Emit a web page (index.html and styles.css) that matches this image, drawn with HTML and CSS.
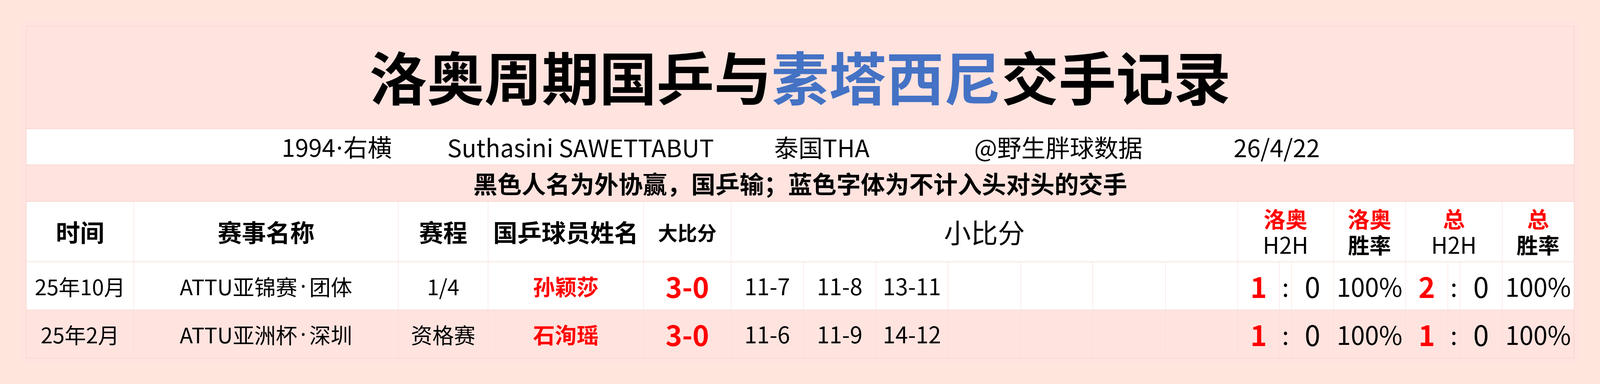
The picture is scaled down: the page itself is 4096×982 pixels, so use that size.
FILE: index.html
```html
<!DOCTYPE html>
<html lang="zh-CN">
<head>
<meta charset="utf-8">
<title>洛奥周期国乒与素塔西尼交手记录</title>
<link rel="stylesheet" href="styles.css">
</head>
<body>
<div class="page">
  <div class="sheet">
    <div class="cell all title pink">洛奥周期国乒与<span class="blue">素塔西尼</span>交手记录</div>
    <div class="cell all info white">
      <span class="info-item w1">1994<span class="dot">·</span>右横</span>
      <span class="info-item w2">Suthasini SAWETTABUT</span>
      <span class="info-item w3">泰国THA</span>
      <span class="info-item w4">@野生胖球数据</span>
      <span class="info-item">26/4/22</span>
    </div>
    <div class="cell all note pink">黑色人名为外协赢，国乒输；蓝色字体为不计入头对头的交手</div>

    <div class="cell white hd">时间</div>
    <div class="cell white hd">赛事名称</div>
    <div class="cell white hd">赛程</div>
    <div class="cell white hd">国乒球员姓名</div>
    <div class="cell white hd hd-small">大比分</div>
    <div class="cell white hd-mid span7">小比分</div>
    <div class="cell white hd2 span3"><span class="top">洛奥</span><span class="h2h">H2H</span></div>
    <div class="cell white hd2"><span class="top">洛奥</span><span class="rate">胜率</span></div>
    <div class="cell white hd2 span3"><span class="top">总</span><span class="h2h">H2H</span></div>
    <div class="cell white hd2 last"><span class="top">总</span><span class="rate">胜率</span></div>

    <div class="cell white d">25年10月</div>
    <div class="cell white d">ATTU亚锦赛<span class="dot wide">·</span>团体</div>
    <div class="cell white d">1/4</div>
    <div class="cell white name">孙颖莎</div>
    <div class="cell white big">3-0</div>
    <div class="cell white ss">11-7</div>
    <div class="cell white ss">11-8</div>
    <div class="cell white ss">13-11</div>
    <div class="cell white ss"></div>
    <div class="cell white ss"></div>
    <div class="cell white ss"></div>
    <div class="cell white ss"></div>
    <div class="cell white hn red">1</div>
    <div class="cell white colon">:</div>
    <div class="cell white hn">0</div>
    <div class="cell white pct">100%</div>
    <div class="cell white hn red">2</div>
    <div class="cell white colon">:</div>
    <div class="cell white hn">0</div>
    <div class="cell white pct last">100%</div>

    <div class="cell pink d">25年2月</div>
    <div class="cell pink d">ATTU亚洲杯<span class="dot wide">·</span>深圳</div>
    <div class="cell pink d">资格赛</div>
    <div class="cell pink name">石洵瑶</div>
    <div class="cell pink big">3-0</div>
    <div class="cell pink ss">11-6</div>
    <div class="cell pink ss">11-9</div>
    <div class="cell pink ss">14-12</div>
    <div class="cell pink ss"></div>
    <div class="cell pink ss"></div>
    <div class="cell pink ss"></div>
    <div class="cell pink ss"></div>
    <div class="cell pink hn red">1</div>
    <div class="cell pink colon">:</div>
    <div class="cell pink hn">0</div>
    <div class="cell pink pct">100%</div>
    <div class="cell pink hn red">1</div>
    <div class="cell pink colon">:</div>
    <div class="cell pink hn">0</div>
    <div class="cell pink pct last">100%</div>
  </div>
</div>
</body>
</html>
```

FILE: styles.css
```css
html, body {
  margin: 0;
  padding: 0;
}
body {
  width: 4096px;
  height: 982px;
  overflow: hidden;
  background: #ffe5db;
  font-family: "Noto Sans CJK SC", "Noto Sans", sans-serif;
  color: #000;
}
.page {
  margin: 55px 55px 0 55px;
  padding: 12px;
  background: #ffe3df;
}
.sheet {
  display: grid;
  grid-template-columns: 275px 677px 230px 398px 224px 185px 186px 184px 187px 184px 186px 185px 107px 31px 107px 185px 108px 31px 108px 184px;
  grid-template-rows: 262px 92px 94px 154px 123px 123px;
  border-left: 1px solid #f1cdc4;
  border-top: 1px solid #f1cdc4;
  width: max-content;
}
.cell {
  box-sizing: border-box;
  display: flex;
  align-items: center;
  justify-content: center;
  border-right: 1px solid #f7dcd4;
  border-bottom: 1px solid #f2c9be;
  white-space: nowrap;
  line-height: 1.2;
}
.white { background: #ffffff; }
.pink { background: #ffe3df; }
.all { grid-column: 1 / -1; border-right-color: #f1cdc4; }
.last { border-right-color: #f1cdc4; }
.span7 { grid-column: span 7; }
.span3 { grid-column: span 3; }

.dot {
  font-family: "Noto Sans", "DejaVu Sans", sans-serif;
  margin: 0 2px;
}
.dot.wide { margin: 0 8px; }

.title {
  font-size: 147px;
  font-weight: 700;
  line-height: 1;
  padding-bottom: 14px;
}
.blue { color: #4472c4; }

.info {
  justify-content: flex-start;
  padding-left: 653px;
  font-size: 62px;
}
.info-item { display: block; }
.w1 { width: 424px; }
.w2 { width: 837px; }
.w3 { width: 512px; }
.w4 { width: 664px; }

.note {
  font-size: 62px;
  font-weight: 700;
}

.hd { font-size: 62px; font-weight: 700; }
.hd-small { font-size: 50px; }
.hd-mid { font-size: 69px; font-weight: 400; }
.hd2 {
  flex-direction: column;
  padding-bottom: 4px;
}
.hd2 .top,
.hd2 .h2h,
.hd2 .rate {
  display: block;
  height: 66px;
  line-height: 66px;
}
.hd2 .top { color: #ff0000; font-weight: 700; font-size: 56px; }
.hd2 .h2h { font-size: 58px; font-weight: 400; }
.hd2 .rate { font-size: 55px; font-weight: 700; }

.d { font-size: 55px; }
.name { color: #ff0000; font-weight: 700; font-size: 56px; }
.big { color: #ff0000; font-weight: 700; font-size: 72px; }
.ss { font-size: 58px; }
.hn { font-size: 72px; }
.hn.red { color: #ff0000; font-weight: 700; }
.colon { font-size: 64px; }
.pct { font-size: 65px; }
```
